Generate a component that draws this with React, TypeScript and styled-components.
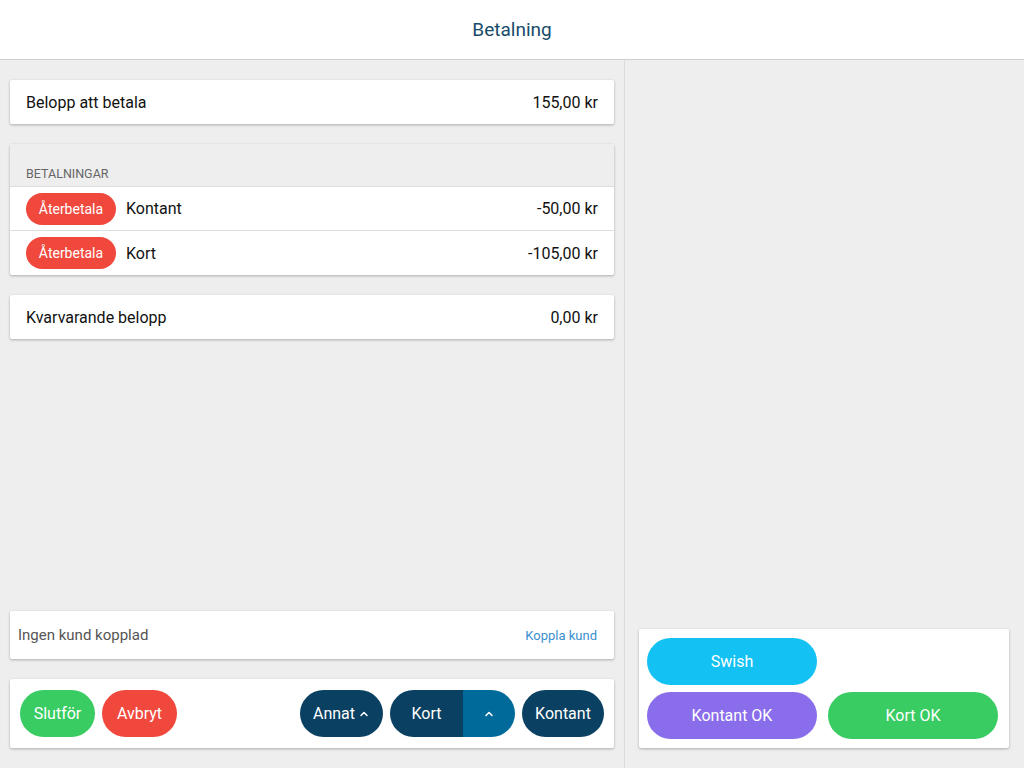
import * as React from 'react';
import styled, { createGlobalStyle } from 'styled-components';

const GlobalStyle = createGlobalStyle`
  html, body {
    margin: 0;
    padding: 0;
    height: 100%;
  }
  body {
    font-family: Roboto, 'Liberation Sans', Arial, sans-serif;
    background: #eeeeee;
    color: #111;
  }
  #root {
    height: 100%;
  }
  * {
    box-sizing: border-box;
  }
`;

const Page = styled.div`
  display: flex;
  flex-direction: column;
  height: 768px;
`;

const Header = styled.header`
  height: 60px;
  flex: none;
  background: #fff;
  border-bottom: 1px solid #cfcfcf;
  display: flex;
  align-items: center;
  justify-content: center;
  font-size: 19px;
  color: #184b6b;
`;

const Main = styled.div`
  flex: 1;
  display: flex;
  min-height: 0;
`;

const LeftColumn = styled.section`
  width: 625px;
  flex: none;
  border-right: 1px solid #dcdcdc;
  padding: 20px 10px 20px 10px;
  display: flex;
  flex-direction: column;
  gap: 20px;
`;

const RightColumn = styled.section`
  flex: 1;
  padding: 0 15px 20px 14px;
  display: flex;
  flex-direction: column;
  justify-content: flex-end;
`;

const Card = styled.div`
  background: #fff;
  box-shadow: 0 1px 3px rgba(0, 0, 0, 0.28);
  border-radius: 2px;
`;

const SummaryRow = styled(Card)`
  height: 44px;
  display: flex;
  align-items: center;
  justify-content: space-between;
  padding: 0 16px;
  font-size: 16px;
`;

const ListHeader = styled.div`
  height: 43px;
  background: #eeeeee;
  border-bottom: 1px solid #dedede;
  display: flex;
  align-items: flex-end;
  padding: 0 16px 5px;
  font-size: 12.5px;
  color: #666;
  text-transform: uppercase;
`;

const PaymentRow = styled.div<{ $last?: boolean }>`
  height: 44px;
  display: flex;
  align-items: center;
  padding: 0 16px;
  font-size: 16px;
  border-bottom: ${p => (p.$last ? 'none' : '1px solid #dedede')};
`;

const RefundPill = styled.button`
  width: 90px;
  height: 32px;
  border: none;
  border-radius: 16px;
  background: #f0483d;
  color: #fff;
  font-family: inherit;
  font-size: 14px;
  padding: 0;
  margin-right: 10px;
`;

const Amount = styled.span`
  margin-left: auto;
`;

const Spacer = styled.div`
  flex: 1;
`;

const CustomerCard = styled(Card)`
  height: 48px;
  display: flex;
  align-items: center;
  justify-content: space-between;
  padding: 0 17px 0 8px;
  font-size: 15px;
  color: #555;
`;

const LinkButton = styled.span`
  font-size: 13px;
  color: #3a8fcf;
`;

const ActionBar = styled(Card)`
  height: 69px;
  display: flex;
  align-items: center;
  padding: 0 10px;
  gap: 7px;
`;

const Pill = styled.button<{ $bg: string; $w: number }>`
  width: ${p => p.$w}px;
  height: 47px;
  border: none;
  border-radius: 24px;
  background: ${p => p.$bg};
  color: #fff;
  font-family: inherit;
  font-size: 16px;
  padding: 0;
  display: flex;
  align-items: center;
  justify-content: center;
  gap: 3px;
  flex: none;
`;

const SplitButton = styled.div`
  display: flex;
  height: 47px;
  width: 125px;
  border-radius: 24px;
  overflow: hidden;
  flex: none;
`;

const SplitPart = styled.button<{ $bg: string; $w: number }>`
  width: ${p => p.$w}px;
  height: 100%;
  border: none;
  background: ${p => p.$bg};
  color: #fff;
  font-family: inherit;
  font-size: 16px;
  padding: 0;
  display: flex;
  align-items: center;
  justify-content: center;
`;

const BarSpacer = styled.div`
  flex: 1;
`;

const QuickCard = styled(Card)`
  padding: 9px 11px 9px 8px;
  display: grid;
  grid-template-columns: 170px 170px;
  column-gap: 11px;
  row-gap: 7px;
`;

const Chevron = () => (
  <svg width="12" height="12" viewBox="0 0 24 24" fill="none" stroke="#fff" strokeWidth="3" strokeLinecap="round" strokeLinejoin="round">
    <path d="M6 15l6-6 6 6" />
  </svg>
);

const NAVY = '#0a4061';
const NAVY_LIGHT = '#006b9a';
const GREEN = '#39cc63';
const RED = '#f0483d';

export default function App() {
  return (
    <Page>
      <GlobalStyle />
      <Header>Betalning</Header>
      <Main>
        <LeftColumn>
          <SummaryRow>
            <span>Belopp att betala</span>
            <span>155,00 kr</span>
          </SummaryRow>
          <Card>
            <ListHeader>Betalningar</ListHeader>
            <PaymentRow>
              <RefundPill>Återbetala</RefundPill>
              <span>Kontant</span>
              <Amount>-50,00 kr</Amount>
            </PaymentRow>
            <PaymentRow $last>
              <RefundPill>Återbetala</RefundPill>
              <span>Kort</span>
              <Amount>-105,00 kr</Amount>
            </PaymentRow>
          </Card>
          <SummaryRow>
            <span>Kvarvarande belopp</span>
            <span>0,00 kr</span>
          </SummaryRow>
          <Spacer />
          <CustomerCard>
            <span>Ingen kund kopplad</span>
            <LinkButton>Koppla kund</LinkButton>
          </CustomerCard>
          <ActionBar>
            <Pill $bg={GREEN} $w={75}>Slutför</Pill>
            <Pill $bg={RED} $w={75}>Avbryt</Pill>
            <BarSpacer />
            <Pill $bg={NAVY} $w={83}>
              Annat <Chevron />
            </Pill>
            <SplitButton>
              <SplitPart $bg={NAVY} $w={73}>Kort</SplitPart>
              <SplitPart $bg={NAVY_LIGHT} $w={52}>
                <Chevron />
              </SplitPart>
            </SplitButton>
            <Pill $bg={NAVY} $w={82}>Kontant</Pill>
          </ActionBar>
        </LeftColumn>
        <RightColumn>
          <QuickCard>
            <Pill $bg="#13c1f2" $w={170}>Swish</Pill>
            <div />
            <Pill $bg="#8a6dea" $w={170}>Kontant OK</Pill>
            <Pill $bg={GREEN} $w={170}>Kort OK</Pill>
          </QuickCard>
        </RightColumn>
      </Main>
    </Page>
  );
}
